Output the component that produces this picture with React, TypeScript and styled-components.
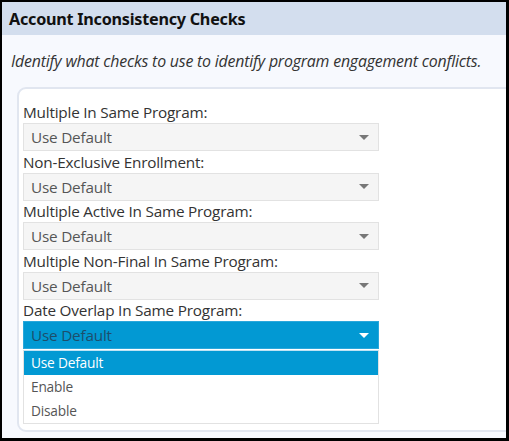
import styled, { createGlobalStyle } from 'styled-components'

const GlobalStyle = createGlobalStyle`
  html, body {
    margin: 0;
    padding: 0;
    background: #ffffff;
  }
  body {
    font-family: 'Open Sans', 'Noto Sans', sans-serif;
  }
`

const Frame = styled.div`
  width: 509px;
  height: 441px;
  box-sizing: border-box;
  border-style: solid;
  border-color: #000;
  border-width: 2px 3px 3px 2px;
  background: #f7f9fe;
  overflow: hidden;
  display: flex;
  flex-direction: column;
`

const Header = styled.div`
  height: 33px;
  flex-shrink: 0;
  background: #d3deee;
  display: flex;
  align-items: center;
  padding-left: 7px;
  font-family: 'Noto Sans', sans-serif;
  font-weight: 700;
  font-size: 16.2px;
  color: #111;
  letter-spacing: -0.25px;
`

const Description = styled.div`
  height: 52px;
  flex-shrink: 0;
  display: flex;
  align-items: center;
  padding-left: 9px;
  font-family: 'Open Sans', sans-serif;
  font-style: italic;
  font-size: 15.9px;
  color: #333;
  letter-spacing: -0.2px;
`

const Fieldset = styled.div`
  margin-left: 15px;
  margin-right: -10px;
  height: 345px;
  box-sizing: border-box;
  background: #ffffff;
  border: 2px solid #e1e6f0;
  border-radius: 9px 0 0 9px;
  padding: 13px 0 0 4px;
  display: flex;
  flex-direction: column;
`

const Field = styled.div`
  display: flex;
  flex-direction: column;
`

const Label = styled.div`
  height: 21px;
  line-height: 21px;
  font-size: 15.3px;
  color: #333;
  letter-spacing: -0.2px;
`

const Select = styled.div<{ $open?: boolean }>`
  width: 356px;
  height: 28px;
  box-sizing: border-box;
  display: flex;
  align-items: center;
  justify-content: space-between;
  padding: 0 9px 0 7px;
  border: 1px solid ${(p) => (p.$open ? '#2aa7db' : '#e2e2e2')};
  background: ${(p) => (p.$open ? '#0299d3' : '#f5f5f5')};
  color: ${(p) => (p.$open ? '#1d4e6b' : '#555')};
  font-size: 15.3px;
  letter-spacing: -0.2px;
  margin-bottom: 0.5px;
`

const Caret = styled.span<{ $open?: boolean }>`
  width: 0;
  height: 0;
  border-left: 5px solid transparent;
  border-right: 5px solid transparent;
  border-top: 5px solid ${(p) => (p.$open ? '#ffffff' : '#777')};
`

const Menu = styled.div`
  width: 356px;
  box-sizing: border-box;
  border: 1px solid #e2e2e2;
  border-top: 1px solid #bfe3f3;
  background: #fff;
  display: flex;
  flex-direction: column;
`

const Option = styled.div<{ $active?: boolean }>`
  height: 24px;
  display: flex;
  align-items: center;
  padding-left: 7px;
  font-size: 13.7px;
  letter-spacing: -0.2px;
  background: ${(p) => (p.$active ? '#0299d3' : '#fff')};
  color: ${(p) => (p.$active ? '#fff' : '#555')};
`

const fields = [
  'Multiple In Same Program:',
  'Non-Exclusive Enrollment:',
  'Multiple Active In Same Program:',
  'Multiple Non-Final In Same Program:',
]

export default function App() {
  return (
    <>
      <GlobalStyle />
      <Frame>
        <Header>Account Inconsistency Checks</Header>
        <Description>
          Identify what checks to use to identify program engagement conflicts.
        </Description>
        <Fieldset>
          {fields.map((label) => (
            <Field key={label}>
              <Label>{label}</Label>
              <Select>
                <span>Use Default</span>
                <Caret />
              </Select>
            </Field>
          ))}
          <Field>
            <Label>Date Overlap In Same Program:</Label>
            <Select $open>
              <span>Use Default</span>
              <Caret $open />
            </Select>
            <Menu>
              <Option $active>Use Default</Option>
              <Option>Enable</Option>
              <Option>Disable</Option>
            </Menu>
          </Field>
        </Fieldset>
      </Frame>
    </>
  )
}
